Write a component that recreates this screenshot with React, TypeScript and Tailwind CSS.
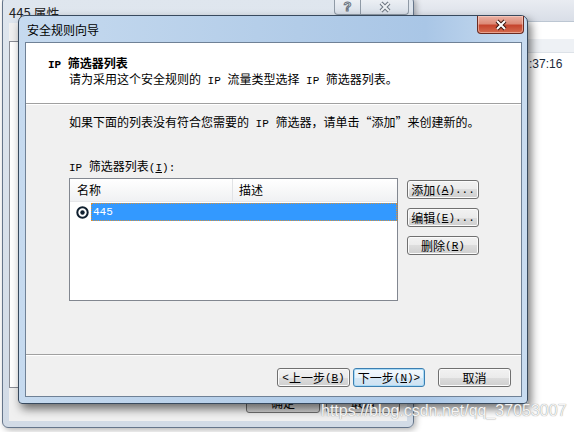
const latin = "font-['Liberation_Mono',monospace] text-[11px]";

// ascii runs use a mono face (SimSun half-width look), the rest stays CJK
function T({ s }: { s: string }) {
  return (
    <>
      {s.split(/([\x20-\x7e]+)/).map((p, i) =>
        i % 2 ? (
          <span key={i} className={latin}>
            {p}
          </span>
        ) : (
          p
        )
      )}
    </>
  );
}

function Key({ k }: { k: string }) {
  return (
    <span className={latin}>
      (<span className="underline underline-offset-1">{k}</span>)
    </span>
  );
}

function Btn({
  children,
  focus,
  w,
}: {
  children: React.ReactNode;
  focus?: boolean;
  w: string;
}) {
  return (
    <div
      className={
        focus
          ? `${w} flex h-[19px] items-center justify-center rounded-[3px] border border-[#3c7fb1] bg-[linear-gradient(180deg,#f4f9fd_0%,#e8f2fa_50%,#d5e7f5_50%,#cfe2f2_100%)] leading-[14px] shadow-[inset_0_0_0_1px_#a8daf6]`
          : `${w} flex h-[19px] items-center justify-center rounded-[3px] border border-[#707070] bg-[linear-gradient(180deg,#f2f2f2_0%,#ebebeb_50%,#dddddd_50%,#cfcfcf_100%)] leading-[14px] shadow-[inset_0_0_0_1px_#fbfbfb]`
      }
    >
      {children}
    </div>
  );
}

function Radio() {
  return (
    <svg width="13" height="13" viewBox="0 0 13 13">
      <circle cx="6.5" cy="6.5" r="5.2" fill="#fff" stroke="#10202f" strokeWidth="2" />
      <circle cx="6.5" cy="6.5" r="2.2" fill="#10202f" />
    </svg>
  );
}

function RightWindow() {
  return (
    <div className="absolute left-[380px] top-0 flex h-[432px] w-[194px] flex-col bg-white">
      <div className="h-[22px] border-b border-[#bcc6d2] bg-[linear-gradient(180deg,#e9ecf2,#d9dee7)]" />
      <div className="h-[17px]" />
      <div className="h-[14px] border-b border-[#dde2e8] bg-[#eef1f5]" />
      <div className="mt-[4px] pl-[149px] font-['Liberation_Sans',sans-serif] text-[12px] leading-[14px] text-[#1b2a3c]">
        :37:16
      </div>
    </div>
  );
}

function PropsWindow() {
  return (
    <div className="absolute left-[2px] top-[-4px] flex h-[432px] w-[412px] flex-col rounded-[6px] border border-[#65758a] bg-[linear-gradient(180deg,#dfe6ee,#d2dbe6)] px-[6px] pb-[6px] shadow-[2px_2px_6px_rgba(0,0,0,0.3)]">
      <div className="h-[26px] pt-[9px] text-[13px] leading-[14px] text-[#222]">445 属性</div>
      <div className="absolute right-[4px] top-0 flex">
        <div className="flex h-[18px] w-[27px] items-start justify-center rounded-bl-[4px] border border-t-0 border-[#8f9aa6] bg-[linear-gradient(180deg,#f0f3f7,#d8dfe8)] pt-[3px] font-['Liberation_Sans',sans-serif] text-[13px] font-bold leading-[13px] text-[#eef1f4] [-webkit-text-stroke:1px_#6b7480]">
          ?
        </div>
        <div className="flex h-[18px] w-[48px] items-center justify-center rounded-br-[4px] border border-l-0 border-t-0 border-[#8f9aa6] bg-[linear-gradient(180deg,#f0f3f7,#d8dfe8)] pt-[3px]">
          <svg width="16" height="12" viewBox="0 0 16 12">
            <path d="M4 2L12 10M12 2L4 10" stroke="#6b7480" strokeWidth="4" />
            <path d="M4 2L12 10M12 2L4 10" stroke="#eef1f4" strokeWidth="2" />
          </svg>
        </div>
      </div>
      <div className="flex flex-1 flex-col bg-[#f0f0f0]">
        <div className="mt-[18px] flex-1 border border-[#898c95] bg-white" />
        <div className="flex h-[33px] justify-end gap-[6px] pr-[7px] pt-[4px]">
          <div className="flex h-[21px] w-[74px] items-center justify-center rounded-[3px] border border-[#707070] bg-[linear-gradient(180deg,#f2f2f2,#d4d4d4)]">
            确定
          </div>
          <div className="flex h-[21px] w-[74px] items-center justify-center rounded-[3px] border border-[#707070] bg-[linear-gradient(180deg,#f2f2f2,#d4d4d4)]">
            取消
          </div>
        </div>
      </div>
    </div>
  );
}

function Wizard() {
  return (
    <div className="absolute left-[18px] top-[15px] flex h-[389px] w-[510px] flex-col rounded-b-[4px] rounded-t-[7px] border border-[#384a5e] bg-[linear-gradient(90deg,#c6daef,#b2cce8_55%,#a9c6e6_80%,#c9dcf0)] pb-[6px] pl-[6px] pr-[5px] shadow-[3px_5px_10px_rgba(0,0,0,0.55)]">
      <div className="flex h-[26px] items-center pl-[2px] pt-[1px] text-[12px] leading-[14px] text-black">
        安全规则向导
      </div>
      <div className="absolute right-[3px] top-0 flex h-[18px] w-[47px] items-center justify-center rounded-b-[4px] border border-t-0 border-[#6a2b21] bg-[linear-gradient(180deg,#eab0a3_0%,#dd8b78_45%,#c6452e_55%,#d46c50_100%)] shadow-[inset_0_0_0_1px_rgba(255,220,210,0.5)]">
        <svg width="16" height="12" viewBox="0 0 16 12">
          <path d="M4 2L12 10M12 2L4 10" stroke="#3b1710" strokeWidth="4" />
          <path d="M4 2L12 10M12 2L4 10" stroke="#ffffff" strokeWidth="2" />
        </svg>
      </div>

      <div className="flex flex-1 flex-col border border-[#6f8196] bg-[#f0f0f0] text-[12px] text-black">
        <div className="h-[60px] bg-white pl-[22px] pt-[13px]">
          <div className="font-bold leading-[13px]">
            <T s="IP 筛选器列表" />
          </div>
          <div className="pl-[21px] leading-[13px]">
            <T s="请为采用这个安全规则的 IP 流量类型选择 IP 筛选器列表。" />
          </div>
        </div>
        <div className="h-px bg-[#a0a0a0]" />
        <div className="h-px bg-white" />

        <div className="flex-1 pl-[43px] pt-[10px]">
          <div className="leading-[14px]">
            <T s="如果下面的列表没有符合您需要的 IP 筛选器，请单击“添加”来创建新的。" />
          </div>
          <div className="mt-[28px] leading-[14px]">
            <T s="IP 筛选器列表" />
            <Key k="I" />
            <span className={latin}>:</span>
          </div>
          <div className="mt-[3px] flex">
            <div className="h-[123px] w-[329px] border border-[#828790] bg-white">
              <div className="flex h-[23px] border-b border-[#e6e7ea] bg-[linear-gradient(180deg,#ffffff,#f0f1f3)] leading-[14px]">
                <div className="flex w-[163px] items-center border-r border-[#e1e3e6] pl-[7px]">名称</div>
                <div className="flex flex-1 items-center pl-[6px]">描述</div>
              </div>
              <div className="mt-[1px] flex h-[18px] items-center pl-[6px]">
                <Radio />
                <div className="ml-[2px] flex h-[18px] flex-1 items-center border border-dotted border-[#d9923a] bg-[#3399ff] pl-[1px] font-['Liberation_Mono',monospace] text-[11px] text-white">
                  445
                </div>
              </div>
            </div>
            <div className="ml-[9px] mt-[2px] flex flex-col gap-[9px]">
              <Btn w="w-[72px]">
                添加<Key k="A" />
                <span className={latin}>...</span>
              </Btn>
              <Btn w="w-[72px]">
                编辑<Key k="E" />
                <span className={latin}>...</span>
              </Btn>
              <Btn w="w-[72px]">
                删除<Key k="R" />
              </Btn>
            </div>
          </div>
        </div>

        <div className="h-px bg-[#a0a0a0]" />
        <div className="h-px bg-white" />
        <div className="flex h-[40px] justify-end pr-[10px] pt-[12px]">
          <Btn w="w-[73px]">
            <span className={latin}>&lt; </span>上一步<Key k="B" />
          </Btn>
          <div className="ml-[3px]">
            <Btn w="w-[72px]" focus>
              下一步<Key k="N" />
              <span className={latin}> &gt;</span>
            </Btn>
          </div>
          <div className="ml-[13px]">
            <Btn w="w-[73px]">取消</Btn>
          </div>
        </div>
      </div>
    </div>
  );
}

export default function App() {
  return (
    <div className="relative h-[432px] w-[574px] overflow-hidden bg-white font-['Noto_Sans_CJK_SC',sans-serif] text-[12px] text-black">
      <RightWindow />
      <PropsWindow />
      <Wizard />
      <div className="absolute left-[321px] top-[402px] font-['Liberation_Sans',sans-serif] text-[16px] leading-[18px] text-[#f4f4f4] [text-shadow:0_0_1px_#7a7a7a]">
        https://blog.csdn.net/qq_37053007
      </div>
    </div>
  );
}
